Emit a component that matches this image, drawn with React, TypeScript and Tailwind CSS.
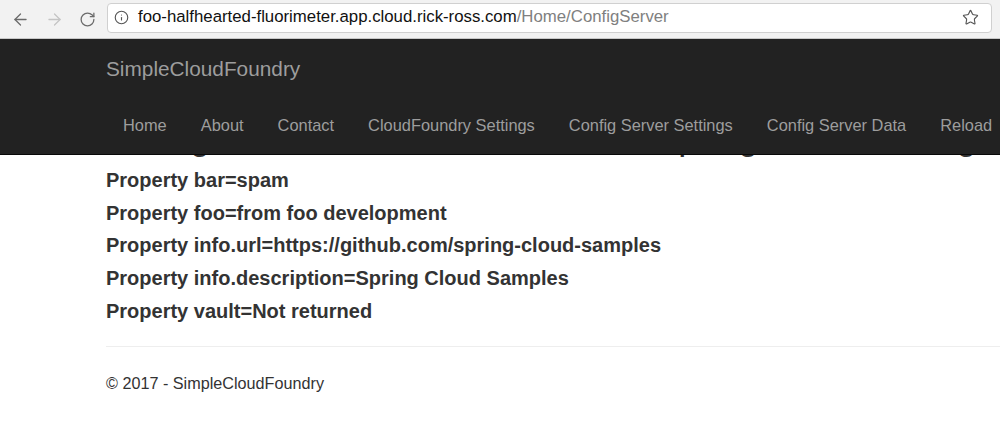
import { ArrowLeft, ArrowRight, RotateCw, Info, Star } from "lucide-react";

const navLinks = [
  "Home",
  "About",
  "Contact",
  "CloudFoundry Settings",
  "Config Server Settings",
  "Config Server Data",
  "Reload",
];

const properties = [
  "Property bar=spam",
  "Property foo=from foo development",
  "Property info.url=https://github.com/spring-cloud-samples",
  "Property info.description=Spring Cloud Samples",
  "Property vault=Not returned",
];

function BrowserBar() {
  return (
    <div className="h-[39px] bg-[#f2f2f2] border-b border-[#c8c8c8] flex items-center">
      <div className="flex items-center w-[107px] pl-[11px] gap-[15px]">
        <ArrowLeft className="w-[19px] h-[19px] text-[#6b6b6b]" strokeWidth={1.6} />
        <ArrowRight className="w-[19px] h-[19px] text-[#c4c4c4]" strokeWidth={1.6} />
        <RotateCw className="w-[17px] h-[17px] text-[#6b6b6b]" strokeWidth={1.8} />
      </div>
      <div className="flex-1 mr-[8px] h-[30px] mb-[4px] mt-[1px] bg-white border border-[#d0d0d0] rounded-[4px] flex items-center pl-[6px] pr-[12px]">
        <Info className="w-[15px] h-[15px] text-[#555]" strokeWidth={1.8} />
        <span className="ml-[9px] text-[16.8px] leading-none font-['Liberation_Sans',sans-serif] text-[#111] whitespace-nowrap">
          foo-halfhearted-fluorimeter.app.cloud.rick-ross.com
          <span className="text-[#808080]">/Home/ConfigServer</span>
        </span>
        <Star className="ml-auto w-[17px] h-[17px] text-[#555]" strokeWidth={1.6} />
      </div>
    </div>
  );
}

function NavBar() {
  return (
    <nav className="absolute top-0 left-0 right-0 z-10 h-[116px] bg-[#222] border-b border-[#080808] text-[#9d9d9d] font-['Liberation_Sans',sans-serif]">
      <div className="pl-[106px] pt-[2px] h-[58px] flex items-center text-[20.8px] whitespace-nowrap">
        SimpleCloudFoundry
      </div>
      <ul className="pl-[106px] h-[57px] flex items-center text-[16.4px] whitespace-nowrap">
        {navLinks.map((link) => (
          <li key={link} className="px-[17px]">
            {link}
          </li>
        ))}
      </ul>
    </nav>
  );
}

export default function App() {
  return (
    <div className="w-[1000px] h-[424px] overflow-hidden bg-white font-['Liberation_Sans',sans-serif] text-[#333]">
      <BrowserBar />
      <div className="relative">
        <NavBar />
        <main className="pl-[106px] pt-[78px]">
          {/* heading sits under the fixed navbar, only descenders peek out */}
          <h1 className="text-[36px] leading-[40px] whitespace-nowrap">
            Config Server Data retrieved from Spring Cloud Config
          </h1>
          <div className="mt-[7px]">
            {properties.map((p) => (
              <h4 key={p} className="text-[20px] leading-[32.7px] font-bold whitespace-nowrap">
                {p}
              </h4>
            ))}
          </div>
          <hr className="mt-[18px] border-t border-[#eee]" />
          <footer className="pt-[24px] text-[16.2px] leading-[24px]">
            © 2017 - SimpleCloudFoundry
          </footer>
        </main>
      </div>
    </div>
  );
}
